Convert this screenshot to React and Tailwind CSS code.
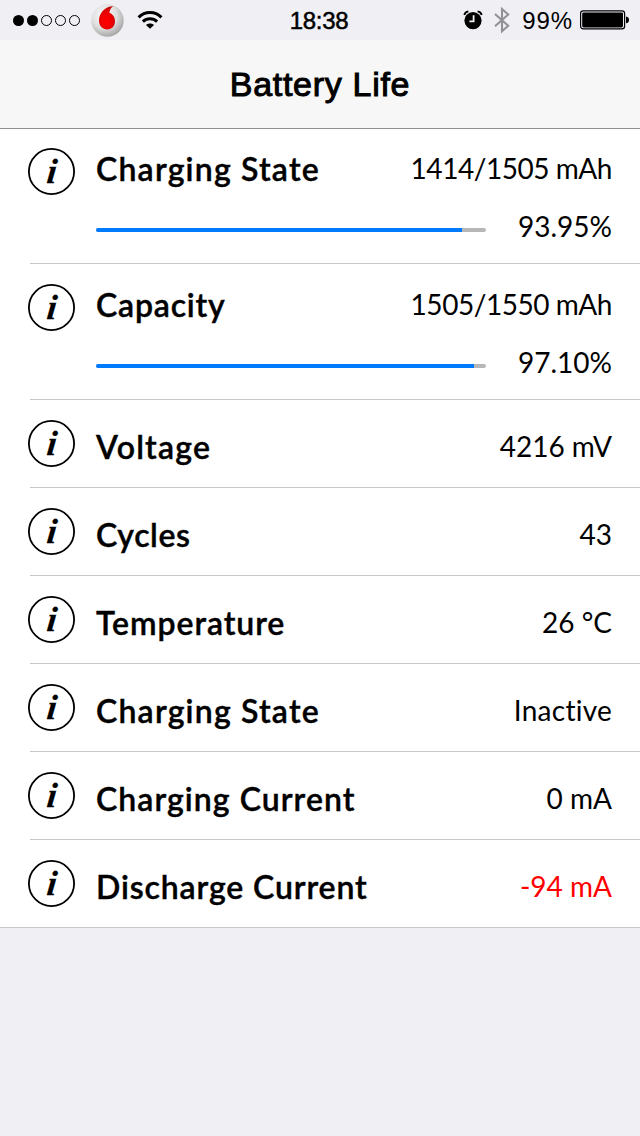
const gauges = [
  {
    label: "Charging State",
    labelClass: "tracking-[1.2px]",
    value: "1414/1505 mAh",
    percent: 93.85,
    percentText: "93.95%",
  },
  {
    label: "Capacity",
    labelClass: "tracking-[0.8px]",
    value: "1505/1550 mAh",
    percent: 96.95,
    percentText: "97.10%",
  },
];

const details = [
  { label: "Voltage", labelClass: "tracking-[1.2px]", value: "4216 mV" },
  { label: "Cycles", labelClass: "tracking-[0.6px]", value: "43" },
  { label: "Temperature", labelClass: "tracking-[0.92px]", value: "26 °C" },
  {
    label: "Charging State",
    labelClass: "tracking-[1.2px]",
    value: "Inactive",
    valueClass: "tracking-[0.25px]",
  },
  { label: "Charging Current", labelClass: "tracking-[1.05px]", value: "0 mA" },
  {
    label: "Discharge Current",
    labelClass: "tracking-[0.87px]",
    value: "-94 mA",
    valueClass: "text-[#ff0000]",
  },
];

const CarrierLogo = () => (
  <svg width="33" height="33" viewBox="0 0 33 33">
    <defs>
      <radialGradient id="ball" cx="0.4" cy="0.35" r="0.65">
        <stop offset="0" stopColor="#ffffff" />
        <stop offset="0.6" stopColor="#dedede" />
        <stop offset="1" stopColor="#a9a9a9" />
      </radialGradient>
      <radialGradient id="drop" cx="0.45" cy="0.65" r="0.6">
        <stop offset="0" stopColor="#ff0000" />
        <stop offset="0.6" stopColor="#ee0000" />
        <stop offset="1" stopColor="#c40a0a" />
      </radialGradient>
    </defs>
    <circle cx="16.5" cy="16.5" r="16.2" fill="url(#ball)" />
    <path
      d="M22.4 2.2C20.2 3.4 18.6 5.6 18.4 8.8C21.8 10.2 24 13.2 24 17.2C24 22 20.8 25.4 16.3 25.4C11.6 25.4 8 22 8 16.6C8 9.2 13.8 2 22.4 2.2Z"
      fill="url(#drop)"
    />
  </svg>
);

const WifiIcon = () => (
  <svg width="26" height="20" viewBox="0 0 26 20" fill="none" stroke="#000" strokeWidth="3">
    <path d="M1.6 7.4C8 0.9 18 0.9 24.4 7.4" />
    <path d="M5.9 11.7C10 7.9 16 7.9 20.1 11.7" />
    <path d="M13 18.8L9 14.9C11.3 12.9 14.7 12.9 17 14.9Z" fill="#000" stroke="none" />
  </svg>
);

const AlarmIcon = () => (
  <svg width="20" height="20" viewBox="0 0 20 20" fill="none">
    <circle cx="10" cy="10.6" r="8.6" fill="#000" />
    <path d="M1.3 5C1.8 3 3.2 1.7 5.4 1.4" stroke="#000" strokeWidth="1.8" />
    <path d="M18.7 5C18.2 3 16.8 1.7 14.6 1.4" stroke="#000" strokeWidth="1.8" />
    <path d="M10.6 5.2V11.4H6.4" stroke="#efeff4" strokeWidth="1.8" />
  </svg>
);

const BluetoothIcon = () => (
  <svg width="16" height="28" viewBox="0 0 16 28" fill="none" stroke="#919196" strokeWidth="2.1">
    <path d="M1 8L14.2 19.7L8 25.2V3L14.2 8.5L1 20.2" />
  </svg>
);

const BatteryIcon = () => (
  <svg width="50" height="20" viewBox="0 0 50 20">
    <rect x="0.6" y="0.9" width="44" height="18" rx="2.6" fill="none" stroke="#000" strokeWidth="1.2" />
    <rect x="2.2" y="2.4" width="40.8" height="15" rx="1.4" />
    <path d="M46 6.5C48 6.8 49 8 49 9.9C49 11.8 48 13 46 13.3Z" />
  </svg>
);

const InfoIcon = () => (
  <svg className="shrink-0" width="47" height="47" viewBox="0 0 47 47">
    <circle cx="23.5" cy="23.5" r="22.6" fill="#fff" stroke="#000" strokeWidth="1.8" />
    <text
      transform="translate(18 34.8) skewX(-6)"
      stroke="#000"
      strokeWidth="0.3"
      className="font-['Liberation_Serif',serif] text-[35px] font-bold italic"
    >
      i
    </text>
  </svg>
);

const StatusBar = () => (
  <div className="grid h-10 grid-cols-3 items-center pl-[13px] pr-[10px] font-['Liberation_Sans',sans-serif]">
    <div className="flex items-center">
      <div className="flex gap-[3px]">
        <span className="size-[11px] rounded-full bg-black" />
        <span className="size-[11px] rounded-full bg-black" />
        <span className="size-[11px] rounded-full border border-black" />
        <span className="size-[11px] rounded-full border border-black" />
        <span className="size-[11px] rounded-full border border-black" />
      </div>
      <div className="ml-[11px]">
        <CarrierLogo />
      </div>
      <div className="ml-[13px]">
        <WifiIcon />
      </div>
    </div>
    <p className="pt-0.5 pr-[5px] text-center text-2xl tracking-[-0.3px] [-webkit-text-stroke:0.5px_black]">
      18:38
    </p>
    <div className="flex items-center justify-end">
      <AlarmIcon />
      <div className="ml-[11px]">
        <BluetoothIcon />
      </div>
      <p className="mr-[7px] ml-3 pt-0.5 text-2xl tracking-[0.9px]">99%</p>
      <BatteryIcon />
    </div>
  </div>
);

const Label = ({ children, className }) => (
  <p
    className={`text-[32px] leading-[42px] font-semibold [-webkit-text-stroke:0.4px_black] ${className}`}
  >
    {children}
  </p>
);

const Value = ({ children, className = "" }) => (
  <p className={`ml-auto text-[28px] leading-10 ${className}`}>{children}</p>
);

const GaugeRow = ({ item }) => (
  <li>
    <div className="flex h-[135px] gap-[21px] pt-5 pr-7 pl-7">
      <InfoIcon />
      <div className="grow">
        <div className="flex">
          <Label className={item.labelClass}>{item.label}</Label>
          <Value className="tracking-[-0.45px]">{item.value}</Value>
        </div>
        <div className="mt-4 flex items-center">
          <div className="mt-[7px] h-1 w-[390px] overflow-hidden rounded-full bg-[#b7b7b7]">
            <div className="h-full bg-[#007aff]" style={{ width: `${item.percent}%` }} />
          </div>
          <Value>{item.percentText}</Value>
        </div>
      </div>
    </div>
    <hr className="ml-[30px] border-[#c8c7cc]" />
  </li>
);

const DetailRow = ({ item, last }) => (
  <li>
    <div className="flex h-[87px] gap-[21px] pt-5 pr-7 pl-7">
      <InfoIcon />
      <div className="flex grow pt-1.5">
        <Label className={item.labelClass}>{item.label}</Label>
        <Value className={item.valueClass}>{item.value}</Value>
      </div>
    </div>
    <hr className={last ? "border-[#c8c7cc]" : "ml-[30px] border-[#c8c7cc]"} />
  </li>
);

const App = () => {
  return (
    <main className="h-[1136px] w-[640px] overflow-hidden bg-[#efeff4] text-black">
      <StatusBar />
      <header className="relative flex h-[88px] items-center justify-center bg-[#f7f7f7] shadow-[0_1px_0_#8e8e93]">
        <h1 className="font-['Liberation_Sans',sans-serif] text-[34px] tracking-[0.7px] [-webkit-text-stroke:1px_black]">
          Battery Life
        </h1>
      </header>
      <ul className="bg-white font-['Lato',sans-serif] [font-variant-ligatures:none]">
        {gauges.map((item) => (
          <GaugeRow key={item.label} item={item} />
        ))}
        {details.map((item, index) => (
          <DetailRow key={item.label} item={item} last={index === details.length - 1} />
        ))}
      </ul>
    </main>
  );
};

export default App;
